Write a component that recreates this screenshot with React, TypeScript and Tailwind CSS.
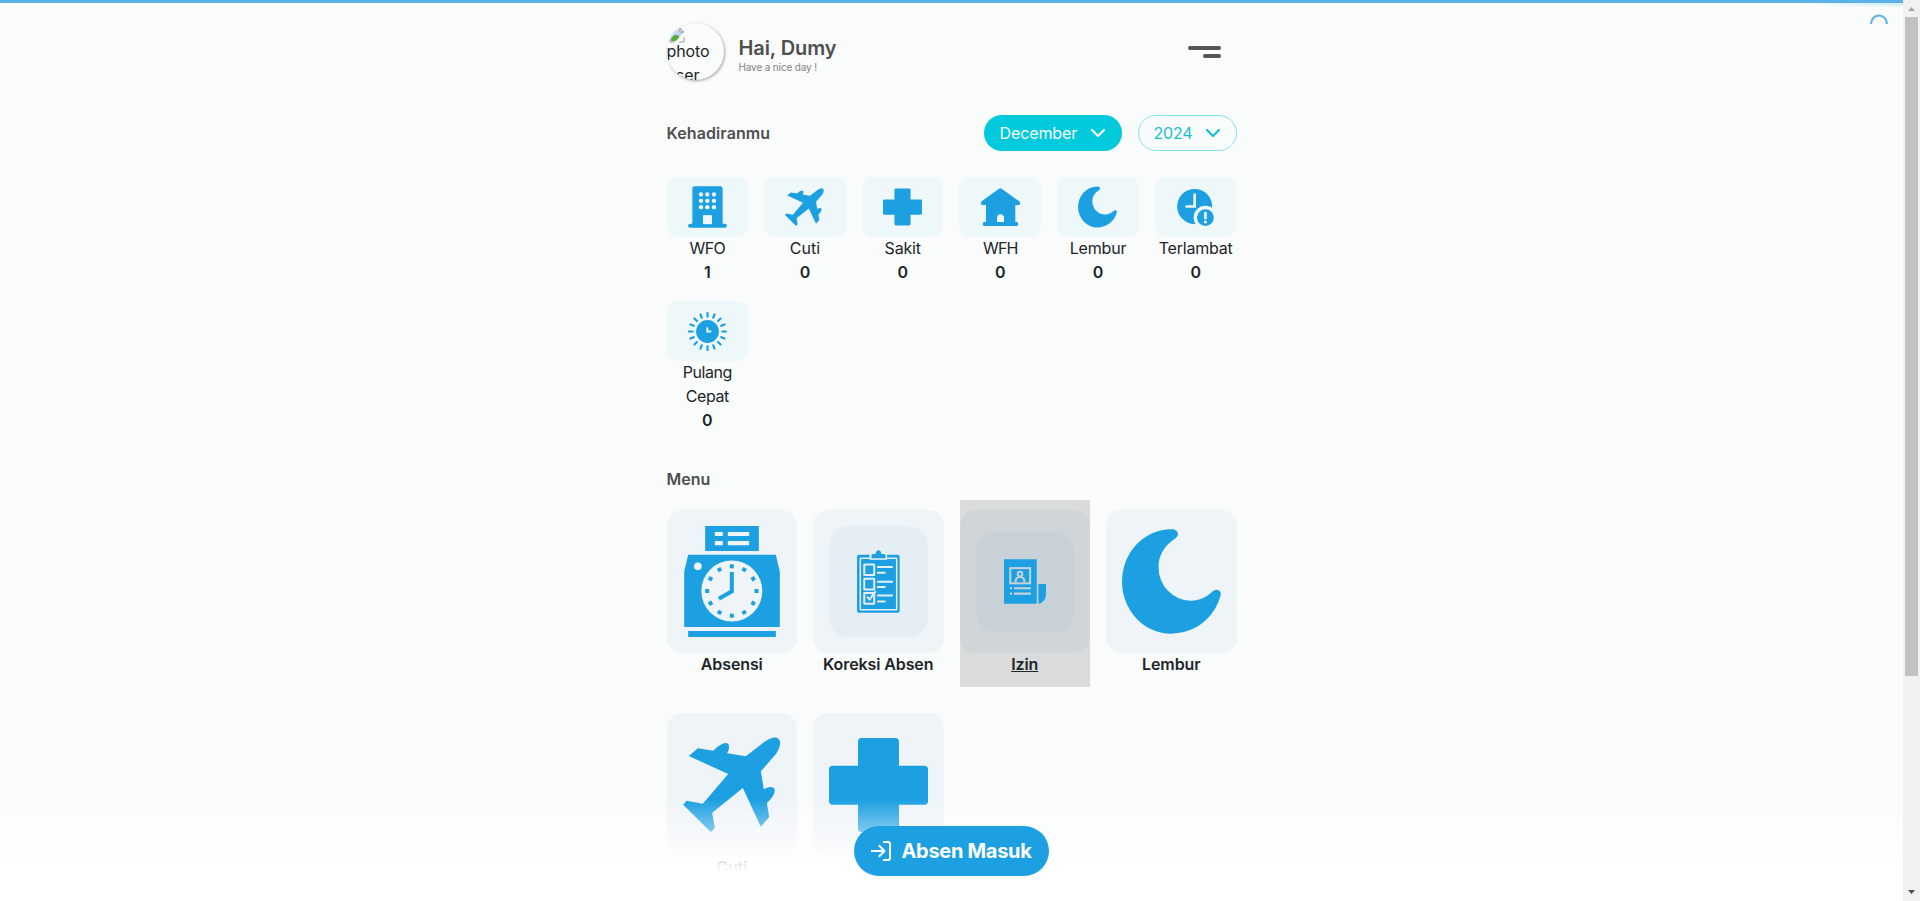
import type { ReactNode } from "react";

const BLUE = "#1da0e2";

type IconProps = { className?: string };

function Building({ className }: IconProps) {
  return (
    <svg viewBox="99 63 117 125" className={className} fill={BLUE}>
      <path d="M112 70q0-7 7-7h77q7 0 7 7v106h6q7 0 7 6t-7 6h-103q-7 0-7-6t7-6h6z" />
      <rect x="144" y="150" width="27" height="27" fill="#eef7fa" />
      {[88, 107, 126].map((y) =>
        [138, 157, 177].map((x) => <circle key={`${x}-${y}`} cx={x} cy={y} r="6.5" fill="#eef7fa" />)
      )}
    </svg>
  );
}

function Plane({ className }: IconProps) {
  return (
    <svg viewBox="86 110 293 285" className={className} fill={BLUE}>
      <path d="M274 168L328 126Q358 105 372 115Q385 128 365 160L319 213L328 267Q351 254 360 265Q365 282 337 308L344 350L319 379L265 263L173 337L181 383L169 395L86 313L96 301L145 310L221 221L103 167L130 144L176 151Q206 122 221 130Q228 141 218 159Z" />
    </svg>
  );
}

function Cross({ className }: IconProps) {
  return (
    <svg viewBox="522 112 297 282" className={className} fill={BLUE}>
      <rect x="609" y="112" width="123" height="282" rx="11" />
      <rect x="522" y="195" width="297" height="117" rx="11" />
    </svg>
  );
}

function House({ className }: IconProps) {
  return (
    <svg viewBox="78 69 117 114" className={className} fill={BLUE}>
      <path d="M132 71q4-3 8 0l53 38q2 2 2 5v2q0 4-5 4h-9v51h4q4 0 4 4v4q0 4-4 4H88q-4 0-4-4v-4q0-4 4-4h5v-51H83q-5 0-5-4v-2q0-3 2-5z" />
      <path d="M126 171v-12q0-11 10.500-11t10.500 11v12z" fill="#eef7fa" />
    </svg>
  );
}

function Moon({ className }: IconProps) {
  return (
    <svg viewBox="516 102 298 314" className={className} fill={BLUE}>
      <path d="M664 102C688 102 690 122 673 132C645 150 626 180 626 215A98 101 0 0 0 722 317C750 317 770 306 787 290C800 277 816 285 813 300C795 370 735 416 664 416A148 157 0 0 1 664 102Z" />
    </svg>
  );
}

function Late({ className }: IconProps) {
  return (
    <svg viewBox="667 71 109 110" className={className} fill={BLUE}>
      <circle cx="719" cy="123" r="52" />
      <path d="M719 88v35h-24" fill="none" stroke="#eef7fa" strokeWidth="8" strokeLinecap="round" />
      <circle cx="751" cy="156" r="35" fill="#eef7fa" />
      <circle cx="751" cy="156" r="25" />
      <path d="M751 143v15" stroke="#eef7fa" strokeWidth="8" strokeLinecap="round" />
      <circle cx="751" cy="169" r="4.500" fill="#eef7fa" />
    </svg>
  );
}

function Sun({ className }: IconProps) {
  return (
    <svg viewBox="99 64 117 118" className={className} fill={BLUE}>
      <circle cx="157.500" cy="123" r="34.500" />
      {Array.from({ length: 16 }, (_, i) => (
        <path
          key={i}
          d="M157.500 67v11"
          stroke={BLUE}
          strokeWidth="6.500"
          strokeLinecap="round"
          transform={`rotate(${i * 22.5} 157.500 123)`}
        />
      ))}
      <path d="M157 111v12h12" fill="none" stroke="#eef7fa" strokeWidth="6" />
    </svg>
  );
}

function TimeClock({ className }: IconProps) {
  return (
    <svg viewBox="88 93 287 333" className={className} fill={BLUE}>
      <path d="M151 93h161v75H151zM100 179h263l12 51v166H88V230zM100 408h263v18H100z" />
      <g fill="#eff4f8">
        <path d="M180 111h24v12h-24zM219 111h64v12h-64zM180 138h24v13h-24zM219 138h64v13h-64z" />
        <circle cx="129" cy="214" r="11.500" />
        <circle cx="231" cy="288" r="91.500" />
      </g>
      {Array.from({ length: 12 }, (_, i) => (
        <rect key={i} x="225" y="208" width="12" height="12" transform={`rotate(${i * 30} 231 288)`} />
      ))}
      <path d="M231 231v58l-39 22" fill="none" stroke={BLUE} strokeWidth="12" />
    </svg>
  );
}

function Checklist({ className }: IconProps) {
  return (
    <svg viewBox="606 165 130 189" className={className} fill={BLUE}>
      <rect x="606" y="179" width="129" height="175" rx="6" />
      <rect x="616" y="189" width="110" height="156" rx="1" fill="none" stroke="#e5edf5" strokeWidth="4.500" />
      <path d="M644 176h53v18h-53z" fill="#e5edf5" />
      <path d="M650 189v-9q0-4 5-4h7q2-11 9-11t9 11h7q5 0 5 4v9z" />
      <g fill="none" stroke="#e5edf5" strokeWidth="6" strokeLinecap="round">
        <rect x="628" y="208" width="30" height="32" rx="1" />
        <rect x="628" y="251" width="30" height="33" rx="1" />
        <rect x="628" y="294" width="30" height="33" rx="1" />
        <path d="M669 216h43M669 233h21M669 260h43M669 276h21M669 302h43M669 320h21" />
        <path d="M638 307l6 7 17-23" />
      </g>
    </svg>
  );
}

function Permit({ className }: IconProps) {
  return (
    <svg viewBox="162 192 127 135" className={className} fill={BLUE}>
      <path d="M162 192h99v135h-99zM266 267h23v30q0 24-23 30z" />
      <g fill="none" stroke="#c8d0d8" strokeWidth="6">
        <rect x="181" y="219" width="60" height="46" />
        <circle cx="210.500" cy="237" r="7" />
        <path d="M197 262q0-16 13.500-16T224 262" />
        <path d="M180 280h6M192 280h51M180 296h6M192 296h51" strokeWidth="6.500" />
      </g>
    </svg>
  );
}

function Chevron({ className }: IconProps) {
  return (
    <svg viewBox="0 0 16 10" className={className} fill="none" stroke="currentColor" strokeWidth="2.200" strokeLinecap="round" strokeLinejoin="round">
      <path d="M2 2l6 6 6-6" />
    </svg>
  );
}

function BrokenImage() {
  return (
    <svg viewBox="0 0 16 16" className="block size-4">
      <path d="M1 1h10l4 4v10H1z" fill="#fff" stroke="#9a9a9a" />
      <path d="M2 2h9v3h3v3L8 14H2z" fill="#c3d5f8" />
      <path d="M2 12q4-7 9-2l-3 4H2z" fill="#55ab3b" />
      <path d="M16 4L5 16h4l7-7z" fill="#fbfdfd" />
      <path d="M11 1v4h4" fill="none" stroke="#9a9a9a" />
    </svg>
  );
}

type Stat = { label: string; count: number; icon: ReactNode; tracking: string };

const stats: Stat[] = [
  { label: "WFO", count: 1, icon: <Building className="h-[42px] w-[39px]" />, tracking: "tracking-[-0.6px]" },
  { label: "Cuti", count: 0, icon: <Plane className="h-[38px] w-[39px]" />, tracking: "tracking-[0px]" },
  { label: "Sakit", count: 0, icon: <Cross className="h-[38px] w-[39px]" />, tracking: "tracking-[-0.2px]" },
  { label: "WFH", count: 0, icon: <House className="h-[38px] w-[39px]" />, tracking: "tracking-[-0.8px]" },
  { label: "Lembur", count: 0, icon: <Moon className="h-[42px] w-[39px]" />, tracking: "tracking-[-0.2px]" },
  { label: "Terlambat", count: 0, icon: <Late className="h-[37px] w-[37px]" />, tracking: "tracking-[-0.2px]" },
  { label: "Pulang Cepat", count: 0, icon: <Sun className="h-[39px] w-[39px]" />, tracking: "tracking-[-0.4px]" },
];

type MenuItem = { label: string; icon: ReactNode; active?: boolean };

const menu: MenuItem[] = [
  { label: "Absensi", icon: <TimeClock className="h-[111px] w-[96px]" /> },
  {
    label: "Koreksi Absen",
    icon: (
      <div className="flex h-[111px] w-[99px] items-center justify-center rounded-[20px] bg-[#e5edf5]">
        <Checklist className="h-[63px] w-[43px]" />
      </div>
    ),
  },
  {
    label: "Izin",
    active: true,
    icon: (
      <div className="flex h-[100px] w-[98px] items-center justify-center rounded-[20px] bg-[#c8d0d8]">
        <Permit className="h-[45px] w-[42px]" />
      </div>
    ),
  },
  { label: "Lembur", icon: <Moon className="h-[105px] w-[99px]" /> },
  { label: "Cuti", icon: <Plane className="h-[95px] w-[98px]" /> },
  { label: "Sakit", icon: <Cross className="h-[94px] w-[99px]" /> },
];

function Header() {
  return (
    <header className="flex h-[57px] items-center">
      <div className="size-[57px] overflow-hidden rounded-full text-base leading-6 text-[#212529] shadow-[1px_1px_3px_rgba(0,0,0,0.35)]">
        <div className="pt-1 pl-0.5">
          <BrokenImage />
        </div>
        <div className="-mt-1 tracking-[-0.1px]">
          photo
          <br />
          user
        </div>
      </div>
      <div className="ml-[15px] pt-[7px]">
        <h1 className="text-[20px] leading-6 font-semibold tracking-[-0.1px] text-[#4f4f4f]">Hai, Dumy</h1>
        <p className="text-[10px] leading-[15px] tracking-[-0.15px] text-[#828282]">Have a nice day !</p>
      </div>
      <div className="mr-4 ml-auto flex flex-col items-end gap-1">
        <span className="h-1 w-[33px] rounded-full bg-[#555]" />
        <span className="h-1 w-[18px] rounded-full bg-[#555]" />
      </div>
    </header>
  );
}

export default function App() {
  return (
    <div className="relative flex h-[901px] w-full overflow-hidden bg-[#fafcfc] font-['Inter',sans-serif] text-[#212529]">
      <main className="relative h-full flex-1 overflow-hidden">
        <div className="mx-auto w-[570px] pt-[23px]">
          <Header />

          <div className="mt-[35px] flex h-9 items-center gap-4">
            <h2 className="mr-auto text-base font-semibold tracking-[0.1px] text-[#4f4f4f]">Kehadiranmu</h2>
            <button className="flex h-9 w-[138px] items-center justify-between rounded-full bg-[#00cadb] px-4 pb-px text-base tracking-[-0.1px] text-white">
              December
              <Chevron className="h-[10px] w-4" />
            </button>
            <button className="flex h-9 w-[99px] items-center justify-between rounded-full border border-[#80e4ed] px-[15px] pb-px text-base tracking-[-0.2px] text-[#18bfd2]">
              2024
              <Chevron className="h-[10px] w-4" />
            </button>
          </div>

          <section className="mt-[26px] grid grid-cols-6 gap-4">
            {stats.map((s) => (
              <div key={s.label} className="pb-px text-center text-base leading-6">
                <div className="-mb-px flex h-[60px] items-center justify-center rounded-[10px] bg-[#eef7fa]">{s.icon}</div>
                <div className={s.tracking}>{s.label}</div>
                <div className="font-semibold">{s.count}</div>
              </div>
            ))}
          </section>

          <h2 className="mt-[34px] text-base leading-6 font-semibold tracking-[0px] text-[#4f4f4f]">Menu</h2>

          <section className="mt-[9px] grid grid-cols-4 gap-4">
            {menu.map((m) => (
              <div key={m.label} className={m.active ? "bg-[#dadcdc] pt-2.5 pb-[11px]" : "pt-2.5 pb-[11px]"}>
                <div
                  className={`-mb-px flex h-[143px] items-center justify-center rounded-[15px] ${m.active ? "bg-[#d0d5d9]" : "bg-[#eff4f8]"}`}
                >
                  {m.icon}
                </div>
                <div
                  className={`text-center text-base leading-6 font-semibold tracking-[-0.1px] whitespace-nowrap ${m.active ? "underline" : ""}`}
                >
                  {m.label}
                </div>
              </div>
            ))}
          </section>
        </div>

        <div className="absolute inset-x-0 bottom-0 flex h-[101px] justify-center bg-[linear-gradient(to_bottom,rgba(255,255,255,0)_0px,#fff_72px)] pt-[26px]">
          <button className="flex h-[50px] w-[195px] items-center justify-center gap-[10px] rounded-full bg-[#1da0e2] text-[20px] font-bold tracking-[-0.3px] whitespace-nowrap text-white">
            <svg viewBox="0 0 20 20" className="size-5 shrink-0" fill="none" stroke="currentColor" strokeWidth="2" strokeLinecap="square">
              <path d="M1 10h12M8.500 5l5 5-5 5" strokeLinejoin="round" />
              <path d="M13 1h4q2 0 2 2v14q0 2-2 2h-4" />
            </svg>
            Absen Masuk
          </button>
        </div>

        <div className="absolute inset-x-0 top-0 h-[3px] bg-[#5ab1e8]" />
        <div className="absolute top-[3px] right-0 h-[5px] w-[100px] bg-[radial-gradient(ellipse_at_top_right,rgba(90,190,240,0.3),transparent_70%)]" />
        <svg viewBox="0 0 18 10" className="absolute top-[14px] right-[15px] h-[10px] w-[18px]" fill="none" stroke="#5ab1e8" strokeWidth="2">
          <path d="M1 10a8 8.500 0 0 1 16 0" />
        </svg>
      </main>

      <div className="flex h-full w-[17px] flex-col items-center bg-[#f1f1f1]">
        <svg viewBox="0 0 17 17" className="size-[17px] shrink-0">
          <path d="M5 11h7L8.500 7z" fill="#a3a3a3" />
        </svg>
        <div className="h-[659px] w-[13px] bg-[#c1c1c1]" />
        <svg viewBox="0 0 17 17" className="mt-auto size-[17px] shrink-0">
          <path d="M5 6h7L8.500 10z" fill="#505050" />
        </svg>
      </div>
    </div>
  );
}
